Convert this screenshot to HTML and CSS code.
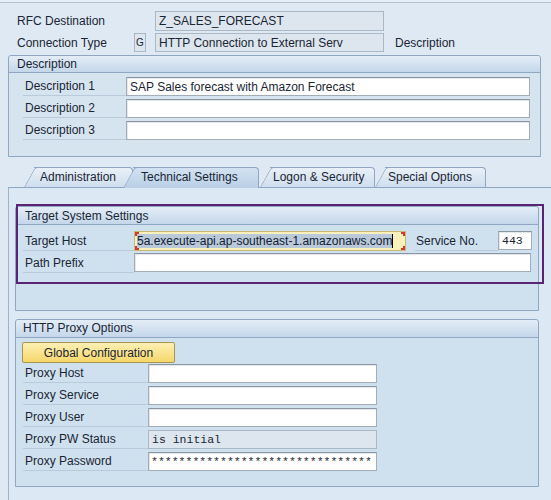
FILE: index.html
```html
<!DOCTYPE html>
<html>
<head>
<meta charset="utf-8">
<link rel="stylesheet" href="styles.css">
</head>
<body>
<div class="topline"></div>
<div class="head">
  <div class="hrow">
    <span class="hlabel">RFC Destination</span>
    <span class="field ro w-dest">Z_SALES_FORECAST</span>
  </div>
  <div class="hrow r2">
    <span class="hlabel short">Connection Type</span>
    <span class="field ro gbox">G</span>
    <span class="field ro w-dest">HTTP Connection to External Serv</span>
    <span class="plain">Description</span>
  </div>
</div>

<section class="group desc">
  <div class="ghead">Description</div>
  <div class="gbody">
    <div class="row"><span class="lbl l-desc">Description 1</span><span class="field w-desc">SAP Sales forecast with Amazon Forecast</span></div>
    <div class="row"><span class="lbl l-desc">Description 2</span><span class="field w-desc"></span></div>
    <div class="row"><span class="lbl l-desc">Description 3</span><span class="field w-desc"></span></div>
  </div>
</section>

<nav class="tabs">
  <span class="tab t-admin">Administration</span>
  <span class="tab active t-tech">Technical Settings</span>
  <span class="tab t-logon">Logon &amp; Security</span>
  <span class="tab t-spec">Special Options</span>
</nav>

<div class="panel">
  <section class="group inner target">
    <div class="ghead">Target System Settings</div>
    <div class="gbody">
      <div class="row">
        <span class="lbl l-target">Target Host</span>
        <span class="field focus w-host"><span class="sel">5a.execute-api.ap-southeast-1.amazonaws.com</span><i class="caret"></i><i class="br tl"></i><i class="br bl"></i><i class="br tr"></i><i class="br br2"></i></span>
        <span class="lbl l-svc">Service No.</span>
        <span class="field mono w-svc">443</span>
      </div>
      <div class="row">
        <span class="lbl l-target">Path Prefix</span>
        <span class="field w-path"></span>
      </div>
    </div>
    <div class="annot"></div>
  </section>

  <section class="group inner proxy">
    <div class="ghead">HTTP Proxy Options</div>
    <div class="gbody">
      <button class="btn">Global Configuration</button>
      <div class="row"><span class="lbl l-proxy">Proxy Host</span><span class="field w-proxy"></span></div>
      <div class="row"><span class="lbl l-proxy">Proxy Service</span><span class="field w-proxy"></span></div>
      <div class="row"><span class="lbl l-proxy">Proxy User</span><span class="field w-proxy"></span></div>
      <div class="row"><span class="lbl l-proxy">Proxy PW Status</span><span class="field ro mono w-proxy">is initial</span></div>
      <div class="row"><span class="lbl l-proxy">Proxy Password</span><span class="field mono w-proxy stars">********************************</span></div>
    </div>
  </section>
</div>
</body>
</html>
```

FILE: styles.css
```css
* { box-sizing: border-box; }
html, body { margin: 0; padding: 0; }
body {
  width: 551px;
  height: 500px;
  overflow: hidden;
  background: #dfe9f4;
  font-family: "Liberation Sans", Arial, sans-serif;
  font-size: 12px;
  color: #1a2533;
}
.topline {
  height: 3px;
  border-bottom: 1px solid #b3c3d4;
  background: #e6eef7;
}
.head { padding: 8px 0 0 17px; }
.hrow { display: flex; align-items: center; height: 20px; }
.hrow.r2 { margin-top: 2px; height: 19px; }
.hlabel { width: 138px; }
.hlabel.short { width: 117px; }
.plain { margin-left: 11px; }

.field {
  display: flex;
  align-items: center;
  height: 100%;
  background: #fff;
  border: 1px solid #a3adb8;
  border-top-color: #8b96a2;
  box-shadow: inset 1px 1px 0 #e4e8ec;
  padding: 0 3px;
  white-space: nowrap;
  overflow: hidden;
  position: relative;
}
.field.ro { background: #dde6ee; border-color: #aab8c6; box-shadow: none; }
.w-dest { width: 229px; }
.gbox { width: 12px; margin-right: 9px; padding: 0; justify-content: center; font-size: 10px; }

.group {
  border: 1px solid #8fa7c1;
  border-radius: 3px 3px 0 0;
  background: #d6e4f0;
}
.ghead {
  height: 17px;
  line-height: 16px;
  padding-left: 8px;
  background: linear-gradient(#e4edf7, #c4d7ea);
  border-bottom: 1px solid #8fa7c1;
  border-radius: 3px 3px 0 0;
}
.desc { margin: 3px 10px 0 8px; height: 102px; }
.desc .ghead { padding-left: 8px; }
.desc .gbody { padding: 4px 0 0 14px; }
.row { display: flex; align-items: stretch; height: 19px; margin-bottom: 3px; }
.lbl {
  display: flex;
  align-items: center;
  border-bottom: 1px solid #b9cadb;
  padding-left: 2px;
  flex: none;
}
.l-desc { width: 103px; }
.w-desc { width: 404px; }

.tabs {
  display: flex;
  height: 20px;
  margin-top: 10px;
  padding-left: 34px;
}
.tab {
  position: relative;
  z-index: 1;
  height: 20px;
  line-height: 19px;
  padding: 0 14px 0 7px;
  background: linear-gradient(#e9f0f8, #cfdeee);
  border: 1px solid #8ea6c1;
  border-left: none;
  border-bottom: none;
  border-radius: 0 4px 0 0;
  white-space: nowrap;
}
.tab::before {
  content: "";
  position: absolute;
  z-index: -1;
  left: -10px;
  top: -1px;
  bottom: 0;
  width: 14px;
  background: inherit;
  border-left: 1px solid #8ea6c1;
  border-top: 1px solid #8ea6c1;
  border-radius: 3px 0 0 0;
  transform: skewX(-29deg);
  transform-origin: bottom left;
}
.tab.active { z-index: 2; background: linear-gradient(#d3e2f2, #b9cfe6); height: 21px; }
.t-admin { width: 99px; padding-left: 6px; }
.t-tech { width: 126px; padding-left: 8px; }
.t-logon { margin-left: 11px; width: 105px; padding-left: 3px; }
.t-spec { margin-left: 10px; width: 101px; padding-left: 3px; }

.panel {
  margin-left: 8px;
  border-top: 1px solid #8ea6c1;
  border-left: 1px solid #9fb4ca;
  background: #dce9f5;
  height: 320px;
  padding: 18px 0 0 6px;
}
.inner { width: 524px; background: #cfe0ee; position: relative; }
.inner .ghead { height: 18px; line-height: 18px; }
.target { height: 105px; }
.target .ghead { padding-left: 9px; }
.target .gbody { padding: 6px 0 0 7px; }
.target .row { height: 20px; margin-bottom: 2px; }
.l-target { width: 111px; }
.w-host { width: 272px; background: #faf0bb; border-color: #c8b870; box-shadow: none; padding-left: 2px; }
.sel { background: #b9c9d9; color: #122033; }
.caret { display: inline-block; width: 1px; height: 14px; background: #000; }
.br { position: absolute; width: 4px; height: 4px; border: 0 solid #d23a2e; }
.br.tl { left: 0; top: 0; border-left-width: 2px; border-top-width: 2px; }
.br.bl { left: 0; bottom: 0; border-left-width: 2px; border-bottom-width: 2px; }
.br.tr { right: 0; top: 0; border-right-width: 2px; border-top-width: 2px; }
.br.br2 { right: 0; bottom: 0; border-right-width: 2px; border-bottom-width: 2px; }
.l-svc { width: 83px; margin-left: 9px; padding-left: 1px; }
.w-svc { width: 34px; height: 19px; }
.w-path { width: 397px; height: 19px; }
.annot {
  position: absolute;
  left: 0px;
  top: -3px;
  width: 528px;
  height: 80px;
  border: 2px solid #5a2474;
}

.proxy { margin-top: 8px; height: 168px; }
.proxy .ghead { padding-left: 7px; height: 18px; line-height: 17px; }
.proxy .gbody { padding: 4px 0 0 6px; }
.btn {
  display: block;
  width: 153px;
  height: 21px;
  margin: 0 0 1px 0;
  font: inherit;
  color: #1a2533;
  background: linear-gradient(#fdf0b4, #f5d76a);
  border: 1px solid #a99450;
  border-radius: 2px;
  padding: 0;
}
.proxy .row { height: 19px; margin-bottom: 3px; margin-left: 1px; }
.l-proxy { width: 125px; }
.w-proxy { width: 229px; }
.mono { font-family: "Liberation Mono", "Courier New", monospace; font-size: 11.5px; }
.stars { padding-left: 2px; }
```
